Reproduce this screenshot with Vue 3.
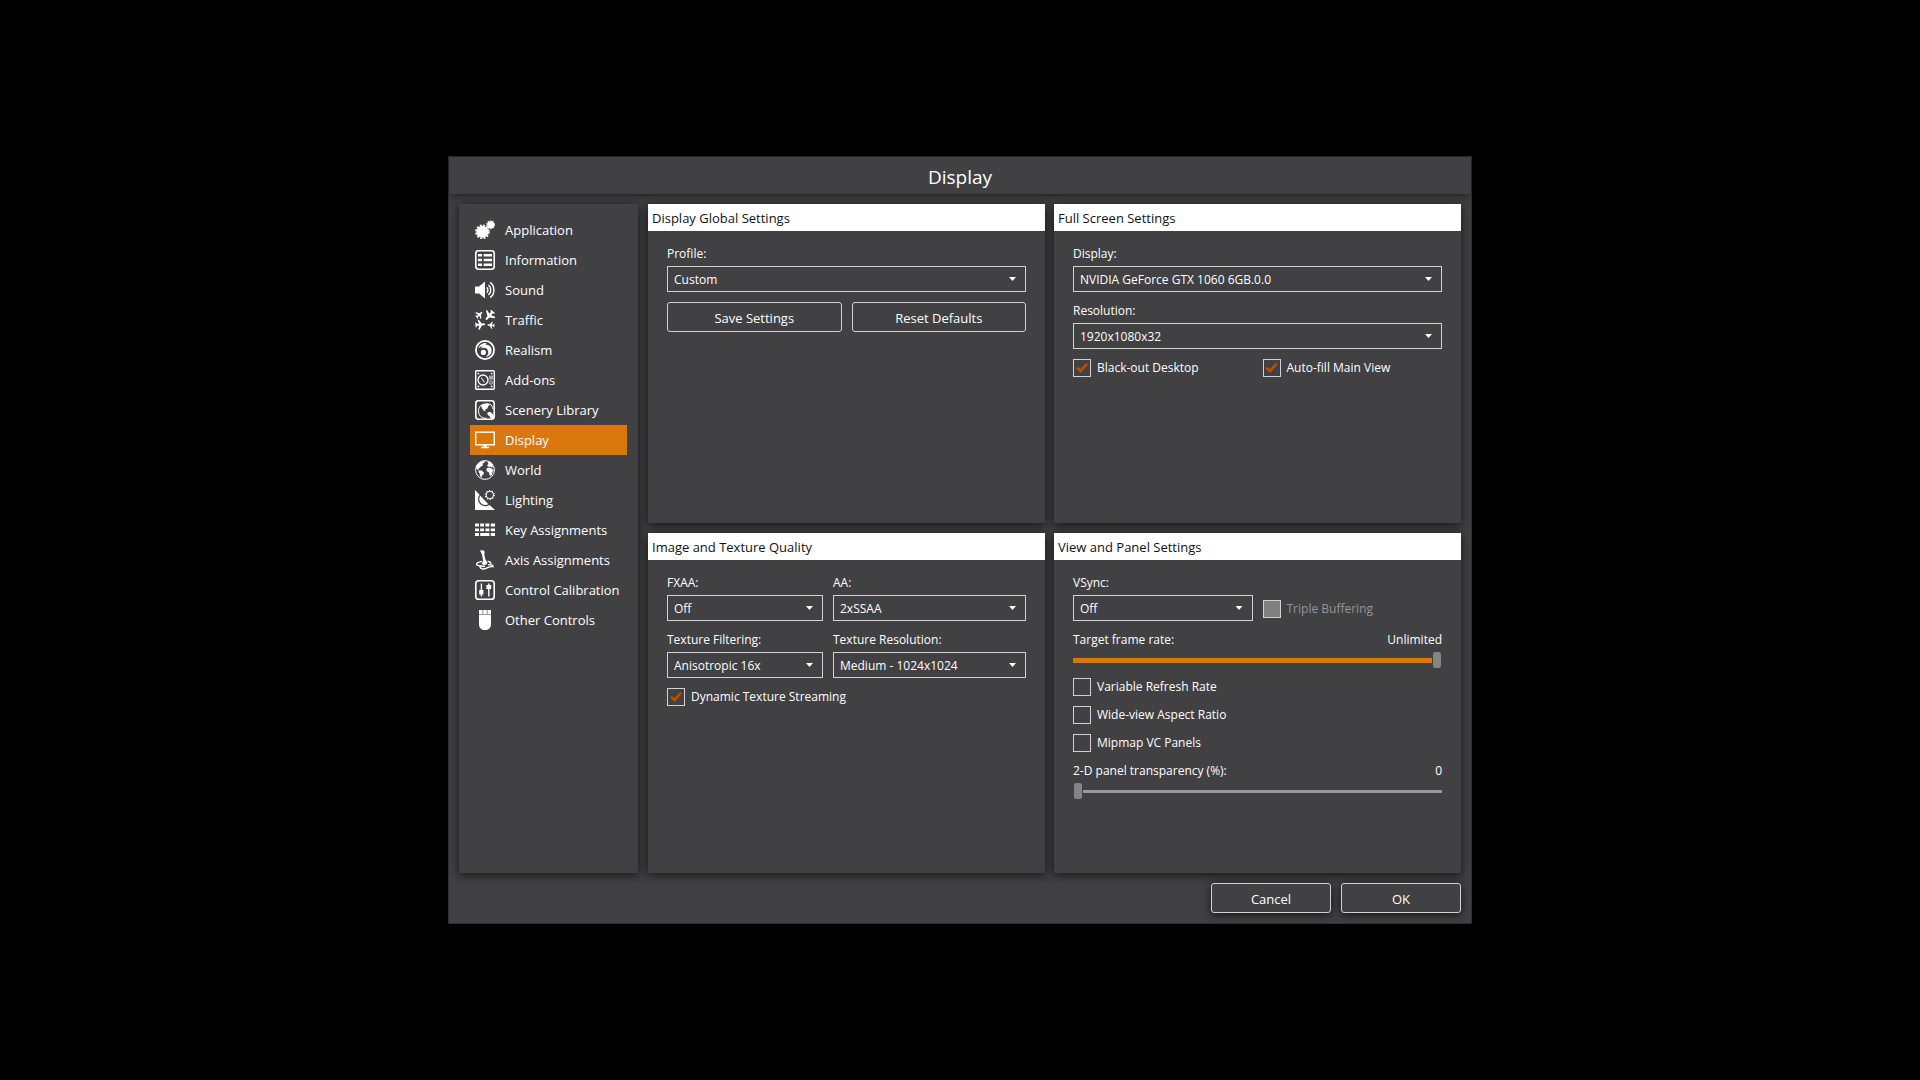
<script setup>
import { ref } from 'vue'

const plane =
  'M10 0 12 2.5V7L20 12.500V15L12 12.500V16.500L15 19V20H5V19L8 16.500V12.500L0 15V12.500L8 7V2.500Z'

const navItems = [
  {
    label: 'Application',
    icon: `<circle cx="7.4" cy="11.8" r="6"/><circle cx="7.4" cy="11.8" r="6.5" fill="none" stroke="currentColor" stroke-width="1.6" stroke-dasharray="2 1.4"/>
      <circle cx="15.6" cy="4.8" r="3.5"/><circle cx="15.6" cy="4.8" r="3.8" fill="none" stroke="currentColor" stroke-width="1.2" stroke-dasharray="1.5 .9"/>`,
  },
  {
    label: 'Information',
    icon: `<rect x=".8" y=".8" width="18.4" height="18.4" rx="2.6" fill="none" stroke="currentColor" stroke-width="1.6"/>
      <path d="M3 4h4v2.4H3zM8.6 4H17v2.4H8.6zM3 8.8h4v2.4H3zM8.6 8.8H17v2.4H8.6zM3 13.6h4V16H3zM8.6 13.6H17V16H8.6z"/>`,
  },
  {
    label: 'Sound',
    icon: `<path d="M0 6.6h4L10 1.6v16.8L4 13.4H0z"/>
      <path d="M11.7 7.4a3.4 3.4 0 0 1 0 5.2M13.4 5a6.4 6.4 0 0 1 0 10M15.2 2.4a9.6 9.6 0 0 1 0 15.2" fill="none" stroke="currentColor" stroke-width="1.4"/>`,
  },
  {
    label: 'Traffic',
    icon: `<path transform="translate(4.400 4.600) rotate(48) scale(.4) translate(-10 -10)" d="${plane}"/>
      <path transform="translate(14.400 5.600) rotate(-140) scale(.56) translate(-10 -10)" d="${plane}"/>
      <path transform="translate(5.400 14.600) rotate(86) scale(.5) translate(-10 -10)" d="${plane}"/>
      <path transform="translate(15.800 15.200) rotate(-84) scale(.36) translate(-10 -10)" d="${plane}"/>`,
  },
  {
    label: 'Realism',
    icon: `<path fill-rule="evenodd" d="M10 0a10 10 0 1 1 0 20 10 10 0 0 1 0-20zM10 1.800a8.200 8.200 0 1 0 0 16.400 8.200 8.200 0 0 0 0-16.400z"/>
      <path d="M3.200 8.600C4.400 4.800 8 2.600 11.600 3.200L10.200 4.400C15.400 4.400 17.400 8.600 16.400 12.200 15.600 15 13.200 16.800 10.600 16.800 13.200 15.200 14 12.600 12.800 10.200 11.400 7.600 7.800 7.200 5.600 8.800L7.400 6.200C5.600 6.600 4.200 7.400 3.200 8.600Z"/>
      <circle cx="8.400" cy="12.400" r="2.600"/>`,
  },
  {
    label: 'Add-ons',
    icon: `<rect x=".7" y=".7" width="18.600" height="18.600" rx="1" fill="none" stroke="currentColor" stroke-width="1.400"/>
      <circle cx="8" cy="10" r="5" fill="none" stroke="currentColor" stroke-width="1.300"/>
      <path d="M6.600 7.400 9.800 12 9 12.600 6 8Z"/>
      <circle cx="3.400" cy="3.600" r=".9"/><circle cx="16.600" cy="3.600" r=".9"/><circle cx="3.400" cy="16.400" r=".9"/><circle cx="16.600" cy="16.400" r=".9"/>
      <path d="M14 5.600h4v4h-4z" opacity=".55"/><circle cx="16" cy="12.600" r="1.600" fill="none" stroke="currentColor" opacity=".7"/>`,
  },
  {
    label: 'Scenery Library',
    icon: `<rect x=".8" y=".8" width="18.400" height="18.400" rx="2.600" fill="none" stroke="currentColor" stroke-width="1.600"/>
      <path d="M6 5.600C7.800 3.600 10.600 2.800 13.600 3.400L15 4.400 13 6.400 12.400 8.400 10 9.600 10.800 11.200 9.200 11 7.200 8.800ZM12.400 12.400 15 11.800 17 13.200 18.600 15.200V18.600H15.600L14.800 16.400 12.600 14.800Z"/>
      <path d="M6.600 4.600C3 7.600 2.400 13 5.600 16.400 7.400 18 9.600 18.400 11.600 18.200M14.600 3.800C16.600 5 17.600 7 18 9" fill="none" stroke="currentColor" stroke-width="1"/>`,
  },
  {
    label: 'Display',
    icon: `<rect x=".7" y="2.200" width="18.600" height="12.600" fill="none" stroke="currentColor" stroke-width="1.400"/>
      <path d="M8.400 15h3.200v1.800H14v1.400H6v-1.400h2.400z"/>`,
  },
  {
    label: 'World',
    icon: `<circle cx="10" cy="10" r="9.400" fill="none" stroke="currentColor" stroke-width="1"/>
      <path d="M1.400 5.800C2.800 3.400 5 1.600 7.600 1L10 1.400 9.200 3 7.400 3.600 8 5.200 6 6.400 4.600 8 3.400 8.400 4 10 2.600 9.800 1 8ZM3.800 10.400 6.400 10.600 9 12.400 8.600 14.200 7 15.600 6.400 18 5 16 4.600 13.600 3.400 12ZM12.600 2.200 14.800 1.600C16.200 2.400 17.400 3.600 18.200 5L17 5.800 18.800 7 17.200 7.600 15.600 6.800 13.600 6.800 12 5.200 13.400 4ZM12 8 14.600 7.600 17 8.800 18.600 10.400 17.400 12 17 14.400 15.400 16 14.400 14.800 14.200 12.400 12.200 11.600 11.200 10Z"/>`,
  },
  {
    label: 'Lighting',
    icon: `<path d="M0 0 4.600 4.800C2.600 7.400 2.400 11 4.600 13.600 7.200 16.600 11.400 17 14.600 15L20 20H0Z"/>
      <path d="M5.400 5.800 13.400 14.200C10.800 15.600 7.600 15.200 5.600 12.800 3.800 10.600 3.800 7.800 5.400 5.800Z"/>
      <circle cx="14.800" cy="5" r="3.700" fill="none" stroke="currentColor" stroke-width="1"/>
      <circle cx="14.800" cy="5" r="4.500" fill="none" stroke="currentColor" stroke-width="1.200" stroke-dasharray="1.200 1.630"/>`,
  },
  {
    label: 'Key Assignments',
    icon: `<path d="M0 3.600h4v3H0zM5.200 3.600H9v3H5.200zM10.400 3.600h4v3h-4zM15.800 3.600H20v3h-4.200zM0 8.400h4v2.800H0zM5.200 8.400H9v2.800H5.200zM10.400 8.400h4v2.800h-4zM15.800 8.400H20v2.800h-4.200zM0 13h4v3H0zM5.200 13h9.200v3H5.200zM15.800 13H20v3h-4.200z"/>`,
  },
  {
    label: 'Axis Assignments',
    icon: `<path d="M5 .6 8.600.2 9.800 2 9.200 4 10.400 9.600 12.400 12.400 11.600 14.600 8.600 15 6.600 13.600 8.200 11 7 4.400Z"/>
      <path d="M7 11.400C3 12 .8 13.600 2 15c1.400 1.400 5 .6 8 1.400M12.600 11.400c2 0 3.600 1 3 2.600M5 15.600C4.400 18 7 19.400 9.600 18.800 13 18.200 13.600 16 18.600 16.800M13 14.600 18.400 15.400" fill="none" stroke="currentColor" stroke-width="1.400"/>`,
  },
  {
    label: 'Control Calibration',
    icon: `<rect x=".8" y=".8" width="18.400" height="18.400" rx="2.800" fill="none" stroke="currentColor" stroke-width="1.600"/>
      <path d="M5.700 3.600h1.400V10H8.400v4.400H7.100v2.200H5.700v-2.200H4.200V10h1.500zM13.100 3.600h1.400V5h1.700v4h-1.700v7.600h-1.400V9h-1.700V5h1.700z"/>`,
  },
  {
    label: 'Other Controls',
    icon: `<path d="M4 0h3.600v4H4zM8.200 0h3.600v4H8.200zM12.400 0H16v4h-3.600zM4 4.600h12V14c0 4-2.400 6-6 6s-6-2-6-6z"/>`,
  },
]

const activeItem = ref('Display')

const profile = ref('Custom')
const display = ref('NVIDIA GeForce GTX 1060 6GB.0.0')
const resolution = ref('1920x1080x32')
const blackOut = ref(true)
const autoFill = ref(true)

const fxaa = ref('Off')
const aa = ref('2xSSAA')
const filtering = ref('Anisotropic 16x')
const textureResolution = ref('Medium - 1024x1024')
const streaming = ref(true)

const vsync = ref('Off')
const tripleBuffering = ref(false)
const frameRate = ref(100)
const variableRefresh = ref(false)
const wideView = ref(false)
const mipmap = ref(false)
const transparency = ref(0)
</script>

<template>
  <div class="desktop">
    <main class="dialog">
      <h1 class="titlebar">Display</h1>

      <div class="content">
        <nav class="sidebar">
          <a
            v-for="item in navItems"
            :key="item.label"
            href="#"
            class="nav-item"
            :class="{ active: item.label === activeItem }"
            @click.prevent="activeItem = item.label"
          >
            <svg class="nav-icon" viewBox="0 0 20 20" aria-hidden="true" v-html="item.icon"></svg>
            <span>{{ item.label }}</span>
          </a>
        </nav>

        <div class="panels">
          <section class="panel">
            <h2 class="panel-title">Display Global Settings</h2>
            <div class="panel-body">
              <div class="field">
                <label for="profile">Profile:</label>
                <div class="select">
                  <select id="profile" v-model="profile"><option>Custom</option></select>
                </div>
              </div>
              <div class="row">
                <button type="button" class="button grow">Save Settings</button>
                <button type="button" class="button grow">Reset Defaults</button>
              </div>
            </div>
          </section>

          <section class="panel">
            <h2 class="panel-title">Full Screen Settings</h2>
            <div class="panel-body">
              <div class="field">
                <label for="display">Display:</label>
                <div class="select">
                  <select id="display" v-model="display"><option>NVIDIA GeForce GTX 1060 6GB.0.0</option></select>
                </div>
              </div>
              <div class="field">
                <label for="resolution">Resolution:</label>
                <div class="select">
                  <select id="resolution" v-model="resolution"><option>1920x1080x32</option></select>
                </div>
              </div>
              <div class="halves">
                <label class="check"><input v-model="blackOut" type="checkbox" />Black-out Desktop</label>
                <label class="check"><input v-model="autoFill" type="checkbox" />Auto-fill Main View</label>
              </div>
            </div>
          </section>

          <section class="panel">
            <h2 class="panel-title">Image and Texture Quality</h2>
            <div class="panel-body">
              <div class="texture-grid">
                <div class="field">
                  <label for="fxaa">FXAA:</label>
                  <div class="select">
                    <select id="fxaa" v-model="fxaa"><option>Off</option><option>On</option></select>
                  </div>
                </div>
                <div class="field">
                  <label for="aa">AA:</label>
                  <div class="select">
                    <select id="aa" v-model="aa"><option>2xSSAA</option></select>
                  </div>
                </div>
                <div class="field">
                  <label for="filtering">Texture Filtering:</label>
                  <div class="select">
                    <select id="filtering" v-model="filtering"><option>Anisotropic 16x</option></select>
                  </div>
                </div>
                <div class="field">
                  <label for="texres">Texture Resolution:</label>
                  <div class="select">
                    <select id="texres" v-model="textureResolution"><option>Medium - 1024x1024</option></select>
                  </div>
                </div>
              </div>
              <label class="check"><input v-model="streaming" type="checkbox" />Dynamic Texture Streaming</label>
            </div>
          </section>

          <section class="panel">
            <h2 class="panel-title">View and Panel Settings</h2>
            <div class="panel-body">
              <div class="halves">
                <div class="field">
                  <label for="vsync">VSync:</label>
                  <div class="select">
                    <select id="vsync" v-model="vsync"><option>Off</option><option>On</option></select>
                  </div>
                </div>
                <label class="check disabled">
                  <input v-model="tripleBuffering" type="checkbox" disabled />Triple Buffering
                </label>
              </div>
              <div class="field">
                <div class="slider-head">
                  <label for="framerate">Target frame rate:</label>
                  <output for="framerate">{{ frameRate >= 100 ? 'Unlimited' : frameRate }}</output>
                </div>
                <input id="framerate" v-model.number="frameRate" class="slider filled" type="range" min="0" max="100" />
              </div>
              <label class="check"><input v-model="variableRefresh" type="checkbox" />Variable Refresh Rate</label>
              <label class="check"><input v-model="wideView" type="checkbox" />Wide-view Aspect Ratio</label>
              <label class="check"><input v-model="mipmap" type="checkbox" />Mipmap VC Panels</label>
              <div class="field">
                <div class="slider-head">
                  <label for="transparency">2-D panel transparency (%):</label>
                  <output for="transparency">{{ transparency }}</output>
                </div>
                <input id="transparency" v-model.number="transparency" class="slider" type="range" min="0" max="100" />
              </div>
            </div>
          </section>
        </div>
      </div>

      <footer class="actions">
        <button type="button" class="button raised">Cancel</button>
        <button type="button" class="button raised">OK</button>
      </footer>
    </main>
  </div>
</template>

<style>
body {
  background: #000;
}
</style>

<style scoped>
.desktop {
  --surface: #414143;
  --line: #d2d2d2;
  --accent: #da770d;
  --shadow: 0 2px 10px rgba(0, 0, 0, 0.7);
  display: flex;
  align-items: center;
  justify-content: center;
  min-height: 100vh;
  background: #000;
  color: #fff;
  font: 12px/18px 'Open Sans', 'Noto Sans', sans-serif;
}

.desktop * {
  box-sizing: border-box;
}

.dialog {
  display: flex;
  flex-direction: column;
  width: 100%;
  max-width: 1024px;
  min-height: calc(100vh - 312px);
  border: 1px solid #303032;
  background: var(--surface);
}

.titlebar {
  margin: 0;
  padding: 8px 0 4px;
  background: var(--surface);
  box-shadow: 0 1px 8px rgba(0, 0, 0, 0.6);
  font-size: 19px;
  font-weight: 400;
  line-height: 25px;
  text-align: center;
}

.content {
  display: flex;
  flex: 1;
  gap: 10px;
  padding: 10px 10px 0;
}

.sidebar {
  flex: 0 0 179px;
  padding: 11px;
  background: var(--surface);
  box-shadow: var(--shadow);
}

.nav-item {
  display: flex;
  align-items: center;
  gap: 10px;
  height: 30px;
  padding-left: 5px;
  color: #fff;
  font-size: 13px;
  text-decoration: none;
  white-space: nowrap;
}

.nav-item.active {
  background: var(--accent);
}

.nav-icon {
  flex: none;
  width: 20px;
  height: 20px;
  fill: currentColor;
}

.panels {
  display: grid;
  flex: 1;
  grid-template-columns: 397fr 407fr;
  grid-template-rows: 319fr 340fr;
  gap: 10px 9px;
}

.panel {
  background: var(--surface);
  box-shadow: var(--shadow);
}

.panel-title {
  margin: 0;
  padding: 2px 4px 0;
  background: #fff;
  color: #111;
  font-size: 13px;
  font-weight: 400;
  line-height: 25px;
}

.panel-body {
  display: flex;
  flex-direction: column;
  gap: 10px;
  padding: 14px 19px;
}

.field {
  display: flex;
  flex-direction: column;
  gap: 3px;
}

.row {
  display: flex;
  gap: 10px;
}

.grow {
  flex: 1;
}

.halves {
  display: grid;
  grid-template-columns: 1fr 1fr;
  align-items: end;
  gap: 10px;
}

.texture-grid {
  display: grid;
  grid-template-columns: 156fr 193fr;
  gap: 10px;
}

.select {
  position: relative;
}

.select::after {
  content: '';
  position: absolute;
  top: 11px;
  right: 10px;
  width: 7px;
  height: 4px;
  background: #fff;
  clip-path: polygon(0 0, 100% 0, 50% 100%);
  pointer-events: none;
}

select {
  display: block;
  width: 100%;
  height: 26px;
  padding: 2px 24px 0 6px;
  border: 1px solid var(--line);
  border-radius: 0;
  appearance: none;
  background: var(--surface);
  color: #fff;
  font: inherit;
}

.button {
  height: 30px;
  padding: 1px 10px 0;
  border: 1px solid var(--line);
  border-radius: 3px;
  background: var(--surface);
  color: #fff;
  font: inherit;
  font-size: 13px;
}

.check {
  display: flex;
  align-items: center;
  gap: 6px;
  height: 18px;
}

.check input {
  position: relative;
  width: 18px;
  height: 18px;
  margin: 0;
  border: 1px solid var(--line);
  appearance: none;
}

.check input:checked::after {
  content: '';
  position: absolute;
  inset: 3px 2px;
  background: #b84e00;
  clip-path: polygon(0 58%, 16% 38%, 38% 60%, 84% 0, 100% 14%, 40% 100%);
}

.check.disabled {
  margin-bottom: 3px;
  color: #949496;
}

.check.disabled input {
  background: #808080;
}

.slider-head {
  display: flex;
  justify-content: space-between;
}

.slider {
  display: block;
  width: 100%;
  height: 16px;
  margin: 0;
  appearance: none;
  background: linear-gradient(#999, #999) center / 100% 3px no-repeat;
}

.slider.filled {
  background: linear-gradient(var(--accent), var(--accent)) center / 100% 5px no-repeat;
}

.slider::-webkit-slider-thumb {
  width: 10px;
  height: 16px;
  border: solid var(--surface);
  border-width: 0 1px;
  border-radius: 3px;
  appearance: none;
  background: #858585;
}

.actions {
  display: flex;
  justify-content: flex-end;
  gap: 10px;
  padding: 10px;
}

.raised {
  width: 120px;
  box-shadow: var(--shadow);
}
</style>
